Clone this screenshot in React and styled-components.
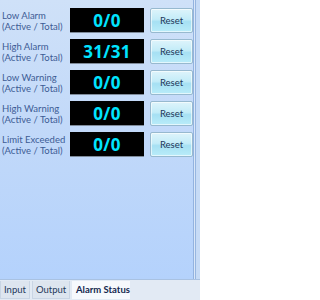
import React from "react";
import styled, { createGlobalStyle } from "styled-components";

const Global = createGlobalStyle`
  html, body { margin: 0; padding: 0; }
  body { width: 200px; height: 300px; overflow: hidden; font-family: Lato, "Open Sans", "Liberation Sans", sans-serif; }
`;

const Frame = styled.div`
  width: 200px;
  height: 300px;
  display: flex;
  flex-direction: column;
  background: #e2eaf4;
`;

const Main = styled.div`
  flex: 1;
  display: flex;
  min-height: 0;
`;

const Panel = styled.div`
  width: 194px;
  border-right: 1px solid #93b3e0;
  background: linear-gradient(180deg, #cfe1f8 0%, #c2d9f9 45%, #b4d2fc 100%);
  padding-top: 8px;
  box-sizing: border-box;
  display: flex;
  flex-direction: column;
  gap: 6px;
`;

const Edge = styled.div`
  flex: 1;
  background: #c6dbf6;
  border-left: 1px solid #d9e7f8;
  display: flex;
`;

const EdgeLine = styled.div`
  width: 1px;
  background: #97b6e0;
`;

const Row = styled.div`
  display: flex;
  align-items: flex-start;
  padding-left: 2px;
  height: 25px;
`;

const Label = styled.div`
  width: 68px;
  flex: none;
  font-family: Lato, "Open Sans", sans-serif;
  font-size: 9.5px;
  line-height: 11px;
  color: #3d5c95;
  white-space: nowrap;
  margin-top: 2px;
`;

const Counter = styled.div`
  width: 74px;
  height: 24px;
  flex: none;
  background: #000;
  border-bottom: 1px solid #7f8b9a;
  color: #00e4ff;
  font-family: "Open Sans", "Liberation Sans", sans-serif;
  font-weight: 700;
  font-size: 17px;
  display: flex;
  align-items: center;
  justify-content: center;
  letter-spacing: 0.3px;
`;

const ResetButton = styled.button`
  width: 43px;
  height: 25px;
  flex: none;
  margin-left: 6px;
  padding: 0;
  border: 1px solid #97b9cf;
  border-radius: 2px;
  background: linear-gradient(180deg, #def4fb 0%, #c3ecf8 45%, #a6e0f3 55%, #b9ecf9 100%);
  box-shadow: inset 0 0 0 1px rgba(255,255,255,0.6);
  font-family: Lato, "Open Sans", sans-serif;
  font-size: 9.5px;
  color: #1e3658;
  display: flex;
  align-items: center;
  justify-content: center;
`;

const TabBar = styled.div`
  height: 21px;
  border-top: 1px solid #a9c2e2;
  background: #e2eaf4;
  display: flex;
  align-items: flex-start;
  gap: 2px;
  padding-top: 1px;
  box-sizing: border-box;
`;

const Tab = styled.div`
  height: 18px;
  padding: 0 3px;
  box-sizing: border-box;
  font-family: Lato, "Open Sans", sans-serif;
  font-size: 9.5px;
  line-height: 17px;
  color: ${p => (p.$active ? "#14284f" : "#24385a")};
  font-weight: ${p => (p.$active ? 700 : 400)};
  background: ${p => (p.$active ? "#f6f9fd" : "#dde5ef")};
  border: 1px solid ${p => (p.$active ? "#f6f9fd" : "#c9d5e4")};
  border-top: none;
  width: ${p => p.$w}px;
  white-space: nowrap;
`;

const rows = [
  ["Low Alarm", "0/0"],
  ["High Alarm", "31/31"],
  ["Low Warning", "0/0"],
  ["High Warning", "0/0"],
  ["Limit Exceeded", "0/0"],
];

export default function App() {
  return (
    <>
      <Global />
      <Frame>
        <Main>
          <Panel>
            {rows.map(([name, val]) => (
              <Row key={name}>
                <Label>
                  {name}
                  <br />
                  (Active / Total)
                </Label>
                <Counter>{val}</Counter>
                <ResetButton>Reset</ResetButton>
              </Row>
            ))}
          </Panel>
          <Edge>
            <EdgeLine />
          </Edge>
        </Main>
        <TabBar>
          <Tab $w={30}>Input</Tab>
          <Tab $w={38}>Output</Tab>
          <Tab $w={58} $active>Alarm Status</Tab>
        </TabBar>
      </Frame>
    </>
  );
}
